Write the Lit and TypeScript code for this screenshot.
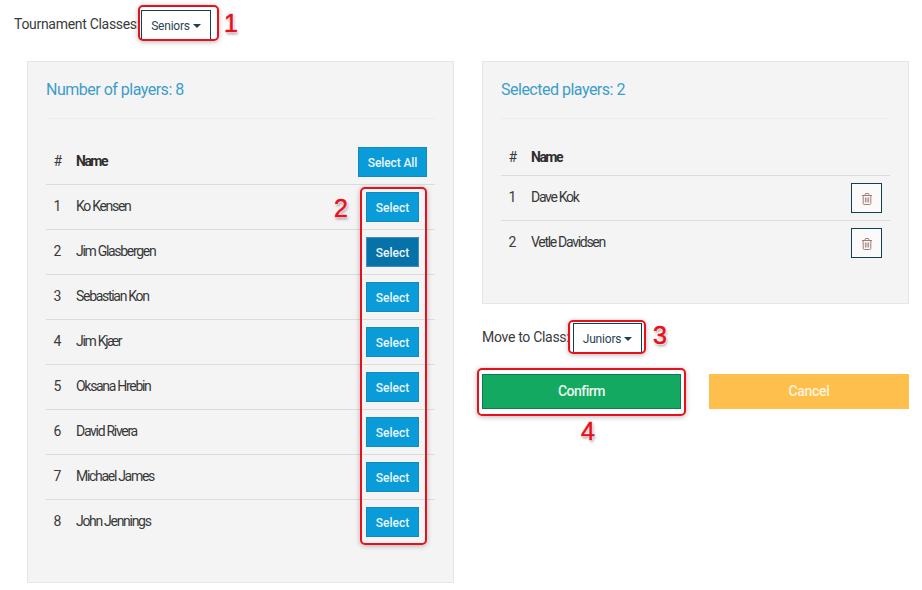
import { LitElement, html, css, svg } from "lit";
import { customElement } from "lit/decorators.js";

const players = ["Ko Kensen", "Jim Glasbergen", "Sebastian Kon", "Jim Kjær", "Oksana Hrebin", "David Rivera", "Michael James", "John Jennings"];
const selected = ["Dave Kok", "Vetle Davidsen"];

const trash = svg`<svg class="trash" width="10" height="12" viewBox="0 0 10 12" fill="none" stroke="currentColor" stroke-width="1">
  <path d="M0 2.5H10M3.2 2.5V1.2C3.2 .8 3.5 .5 3.9 .5H6.1C6.5 .5 6.8 .8 6.8 1.2V2.5"/>
  <path d="M1.2 2.5V10.4C1.2 11 1.6 11.5 2.2 11.5H7.8C8.4 11.5 8.8 11 8.8 10.4V2.5"/>
  <path d="M3.4 4.5V9.5M5 4.5V9.5M6.6 4.5V9.5" stroke-width=".9"/>
</svg>`;

@customElement("app-root")
export class AppRoot extends LitElement {
  static styles = css`
    :host { display: block; width: 922px; height: 590px; overflow: hidden; background: #fff; font-family: Roboto, "Liberation Sans", sans-serif; position: relative; color: #333; }
    * { box-sizing: border-box; }
    .top { display: flex; align-items: center; height: 30px; margin: 10px 0 21px 14px; }
    .label { font-size: 14px; letter-spacing: -0.3px; color: #3a3a3a; width: 127px; white-space: nowrap; padding-bottom: 2px; }
    .dd { display: inline-flex; align-items: center; justify-content: center; gap: 3px; height: 30px; background: #fff; border: 1px solid #123e4e; color: #2c4352; font: 12px Roboto, sans-serif; letter-spacing: -0.2px; padding: 2px 0 0; }
    .dd.s { width: 70px; }
    .dd.j { width: 69px; }
    .caret { width: 0; height: 0; margin-top: -1px; border-left: 4px solid transparent; border-right: 4px solid transparent; border-top: 4px solid #1f3f50; }
    .cols { display: grid; grid-template-columns: 427px 427px; gap: 28px; padding-left: 27px; align-items: start; }
    .panel { background: #f4f4f4; border: 1px solid #e6e6e6; padding: 18px 18px 37px; }
    h2 { margin: 0; font: 400 16px/19px Roboto, sans-serif; letter-spacing: -0.5px; color: #3c9dcb; }
    hr { border: 0; border-top: 1px solid #ededed; margin: 19px 0 20px; }
    .row { display: grid; grid-template-columns: 30px 1fr 69px; align-items: center; border-bottom: 1px solid #dcdcdc; padding-right: 8px; height: 45px; font-size: 14px; }
    .row.last { border-bottom-color: transparent; }
    .row.head { height: 46px; padding-bottom: 7px; }
    .panel.r .row.head { height: 37px; padding-bottom: 0; }
    .panel.r .row { grid-template-columns: 30px 1fr 31px; }
    .row > span { padding-bottom: 2px; }
    .num { padding-left: 7.5px; color: #3a3a3a; letter-spacing: -0.3px; }
    .name { letter-spacing: -1.3px; color: #383838; }
    .head .name { font-weight: 700; color: #2e2e2e; letter-spacing: -1.5px; }
    .head .num { font-weight: 400; letter-spacing: -0.8px; }
    .row.head > span { padding-bottom: 0; padding-top: 5px; }
    .panel.r .row.head > span { padding-top: 0; padding-bottom: 1px; }
    .btn { display: flex; align-items: center; justify-content: center; height: 30px; background: #0a9bd9; border: 1px solid #1389bc; color: #e9f6fc; font: 500 12px Roboto, sans-serif; padding: 2px 0 0; justify-self: center; }
    .btn.sel { width: 53px; }
    .btn.all { width: 69px; letter-spacing: -0.1px; align-self: end; }
    .btn.on { background: #0772a8; border-color: #3f8fc4; }
    .tbtn { display: flex; align-items: center; justify-content: center; width: 31px; height: 30px; background: #fafafa; border: 1px solid #123e4e; padding: 0; color: #a67a75; }
    .trash { display: block; margin-top: 2px; }
    .side { display: flex; flex-direction: column; }
    .move { display: flex; align-items: center; height: 30px; margin-top: 19px; }
    .move .label { width: 91px; }
    .actions { display: grid; grid-template-columns: 199px 200px; gap: 28px; margin-top: 21px; }
    .act { height: 35px; border: 0; font: 500 14px Roboto, sans-serif; letter-spacing: -0.5px; color: #e8f7ef; padding: 0 0 2px; }
    .ok { background: #14a960; border: 1px solid #0e7a50; }
    .no { background: #ffbf4d; color: #fdf3dc; letter-spacing: -0.3px; }
    .mark { position: absolute; border: 2px solid #e8101c; border-radius: 5px; box-shadow: 0 1px 5px rgba(90,90,90,.45); pointer-events: none; }
    .m1 { left: 138px; top: 5px; width: 81px; height: 36px; }
    .m2 { left: 360px; top: 187px; width: 67px; height: 358px; }
    .m3 { left: 568px; top: 320px; width: 78px; height: 34px; }
    .m4 { left: 477px; top: 368px; width: 209px; height: 48px; }
    .n { position: absolute; font: 400 25px/28px "Liberation Sans", sans-serif; color: #e8101c; -webkit-text-stroke: 0.6px #e8101c; text-shadow: 0 0 1px #fff, 1px 0 1px #fff, -1px 0 1px #fff, 0 1px 1px #fff, 0 -1px 1px #fff, 1px 2px 3px rgba(60,60,60,.6); }
    .n1 { left: 224px; top: 9px; }
    .n2 { left: 334px; top: 194px; }
    .n3 { left: 653px; top: 321px; }
    .n4 { left: 581px; top: 417px; }
  `;

  render() {
    return html`
      <div class="top">
        <span class="label">Tournament Classes:</span>
        <button class="dd s">Seniors<i class="caret"></i></button>
      </div>
      <div class="cols">
        <section class="panel">
          <h2>Number of players: 8</h2>
          <hr />
          <div class="row head">
            <span class="num">#</span><span class="name">Name</span>
            <button class="btn all">Select All</button>
          </div>
          ${players.map((p, i) => html`
            <div class="row ${i === players.length - 1 ? "last" : ""}">
              <span class="num">${i + 1}</span><span class="name">${p}</span>
              <button class="btn sel ${i === 1 ? "on" : ""}">Select</button>
            </div>`)}
        </section>
        <div class="side">
          <section class="panel r">
            <h2>Selected players: 2</h2>
            <hr />
            <div class="row head">
              <span class="num">#</span><span class="name">Name</span><span></span>
            </div>
            ${selected.map((p, i) => html`
              <div class="row ${i === selected.length - 1 ? "last" : ""}">
                <span class="num">${i + 1}</span><span class="name">${p}</span>
                <button class="tbtn" aria-label="Remove">${trash}</button>
              </div>`)}
          </section>
          <div class="move">
            <span class="label">Move to Class:</span>
            <button class="dd j">Juniors<i class="caret"></i></button>
          </div>
          <div class="actions">
            <button class="act ok">Confirm</button>
            <button class="act no">Cancel</button>
          </div>
        </div>
      </div>
      <div class="mark m1"></div><span class="n n1">1</span>
      <div class="mark m2"></div><span class="n n2">2</span>
      <div class="mark m3"></div><span class="n n3">3</span>
      <div class="mark m4"></div><span class="n n4">4</span>
    `;
  }
}
